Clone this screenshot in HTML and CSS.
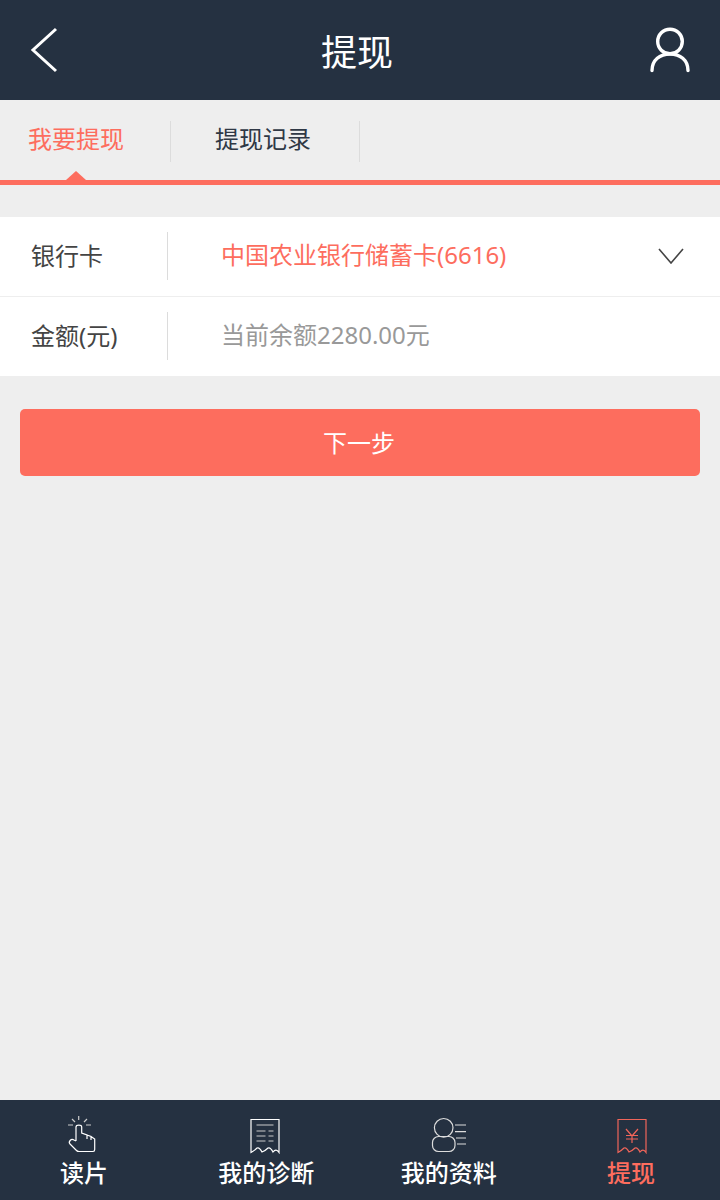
FILE: index.html
```html
<!DOCTYPE html>
<html lang="zh-CN">
<head>
  <meta charset="UTF-8" />
  <meta name="viewport" content="width=device-width, initial-scale=1.0"/>
  <title>提现</title>
  <link rel="stylesheet" href="styles.css">
</head>
<body>

  <header class="top-bar">
    <svg class="top-icon" width="40" height="50" viewBox="0 0 40 50">
      <path d="M26 4 L3 25 L26 46" fill="none" stroke="#fff" stroke-width="3"/>
    </svg>
    <h1 class="top-title">提现</h1>
    <svg class="top-icon" width="40" height="50" viewBox="0 0 40 50">
      <circle cx="20" cy="16.500" r="12.300" fill="none" stroke="#fff" stroke-width="3.400"/>
      <path d="M2 45.500 C2 35 10 29 20 29 C30 29 38 35 38 45.500" fill="none" stroke="#fff" stroke-width="3.400" stroke-linecap="round"/>
    </svg>
  </header>

  <div class="tabs">
    <div class="tab tab-active">我要提现</div>
    <div class="tab">提现记录</div>
  </div>

  <div class="form">
    <div class="row">
      <div class="row-label">银行卡</div>
      <div class="row-value value-red">中国农业银行储蓄卡(6616)</div>
      <svg class="chevron" width="26" height="16" viewBox="0 0 26 16">
        <path d="M1 1 L13 15 L25 1" fill="none" stroke="#444" stroke-width="1.600"/>
      </svg>
    </div>
    <div class="row">
      <div class="row-label">金额(元)</div>
      <div class="row-value value-grey">当前余额2280.00元</div>
    </div>
  </div>

  <button class="next-btn">下一步</button>

  <nav class="bottom-nav">
    <div class="nav-item nav-read">
      <svg width="30" height="38" viewBox="0 0 30 38" fill="none" stroke="#fff" stroke-width="1.200">
        <path d="M12.700 0 V4 M6 3 L9 6 M21 3 L18 6 M2 9 H7 M20 9 H25" stroke="#ccc"/>
        <path d="M10 25 V11 C10 8.500 15.700 8.500 15.700 11 V17 L21 19 V23 M21 19 L25 20.500 V24 M25 20.500 L28.700 23 V33.500 Q28.700 35.500 27 35.500 H13 Q11.500 35.500 10.500 34.500 L4 28 C2 26 5 22 8 24 L10 25"/>
      </svg>
      <span>读片</span>
    </div>
    <div class="nav-item nav-diag">
      <svg width="30" height="38" viewBox="0 0 30 38" fill="none" stroke="#fff" stroke-width="1.200">
        <path d="M1 36.500 V3.500 H29 V36.500 Q26 32 23 36 Q20.500 31 18 32 Q15 35 12 36 Q9.500 31 7 32 Q4 35 1 36.500 Z"/>
        <path d="M6.500 9 H23.500 M6.500 15 H15.500 M18.500 15 H23.500 M6.500 20 H15.500 M18.500 20 H23.500 M6.500 25 H15.500 M18.500 25 H23.500" stroke="#ccc"/>
      </svg>
      <span>我的诊断</span>
    </div>
    <div class="nav-item">
      <svg width="36" height="38" viewBox="0 0 36 38" fill="none" stroke="#ddd" stroke-width="1.200">
        <circle cx="12.700" cy="11.800" r="9.300"/>
        <rect x="1.500" y="20.500" width="22.500" height="15" rx="6"/>
        <path d="M24 9 H35 M24 15.700 H35 M25 22 H35 M26 28 H35"/>
      </svg>
      <span>我的资料</span>
    </div>
    <div class="nav-item nav-active">
      <svg width="30" height="38" viewBox="0 0 30 38" fill="none" stroke="#f0655a" stroke-width="1.200">
        <path d="M1 36.500 V3.500 H29 V36.500 Q26 32 23 36 Q20.500 31 18 32 Q15 35 12 36 Q9.500 31 7 32 Q4 35 1 36.500 Z"/>
        <path d="M9 13 L15 20 L21 13 M15 20 V27 M9 19.500 H21 M9 23 H21"/>
      </svg>
      <span>提现</span>
    </div>
  </nav>

</body>
</html>
```

FILE: styles.css
```css
body {
  margin: 0;
  padding: 0;
  font-family: "Noto Sans", "Noto Sans CJK SC", sans-serif;
  background: #eeeeee;
  display: flex;
  flex-direction: column;
  height: 100vh;
  overflow: hidden;
}

.top-bar {
  height: 100px;
  flex: none;
  background: #253141;
  display: flex;
  align-items: center;
  justify-content: space-between;
  padding: 0 30px;
}

.top-title {
  margin: 6px 6px 0 0;
  font-size: 36px;
  line-height: 50px;
  font-weight: 400;
  color: #fff;
}

.tabs {
  height: 80px;
  flex: none;
  box-sizing: content-box;
  display: flex;
  align-items: flex-start;
  padding-top: 0;
  border-bottom: 5px solid #fd6d5e;
  position: relative;
}

.tab {
  width: 189px;
  height: 41px;
  margin-top: 21px;
  box-sizing: border-box;
  padding-right: 4px;
  line-height: 36px;
  text-align: center;
  font-size: 24px;
  color: #2f3845;
  border-right: 1px solid #dcdcdc;
}

.tab-active {
  width: 171px;
  padding-right: 18px;
  color: #fd6d5e;
}

/* little arrow sitting on the red line */
.tabs::after {
  content: '';
  position: absolute;
  left: 66px;
  bottom: 0;
  border-left: 10px solid transparent;
  border-right: 10px solid transparent;
  border-bottom: 9px solid #fd6d5e;
}

.form {
  margin-top: 32px;
  background: #fff;
  flex: none;
}

.row {
  height: 80px;
  box-sizing: border-box;
  display: flex;
  align-items: center;
  padding-right: 36px;
  border-bottom: 1px solid #eeeeee;
}

.row:last-child {
  height: 79px;
  border-bottom: 0;
}

.row-label {
  width: 168px;
  height: 48px;
  margin-bottom: 1px;
  box-sizing: border-box;
  padding-left: 31px;
  line-height: 48px;
  font-size: 24px;
  color: #444;
  border-right: 1px solid #dcdcdc;
}

.row-value {
  flex: 1;
  margin-left: 53px;
  margin-bottom: 3px;
  font-size: 24px;
  line-height: 36px;
}

.value-red {
  color: #fd6d5e;
}

.value-grey {
  color: #999;
}

.chevron {
  margin-bottom: 2px;
}

.next-btn {
  flex: none;
  display: block;
  margin: 33px 20px 0;
  padding: 0 2px 2px 0;
  height: 67px;
  width: 680px;
  border: 0;
  border-radius: 5px;
  background: #fd6d5e;
  color: #fff;
  font-family: inherit;
  font-size: 24px;
}

.bottom-nav {
  margin-top: auto;
  height: 100px;
  flex: none;
  box-sizing: border-box;
  background: #253141;
  display: flex;
  justify-content: space-between;
  padding: 16px 41px 0 36px;
}

.nav-item {
  width: 96px;
  display: flex;
  flex-direction: column;
  align-items: center;
  color: #fff;
  font-size: 24px;
  font-weight: 500;
  line-height: 36px;
}

.nav-item svg {
  display: block;
  flex: none;
  margin-bottom: 1px;
}

.nav-read svg {
  margin-right: 6px;
}

.nav-diag svg {
  margin-right: 3px;
}

.nav-active svg {
  margin-left: 3px;
}

.nav-item span {
  white-space: nowrap;
}

.nav-active {
  color: #fd6d5e;
}
```
